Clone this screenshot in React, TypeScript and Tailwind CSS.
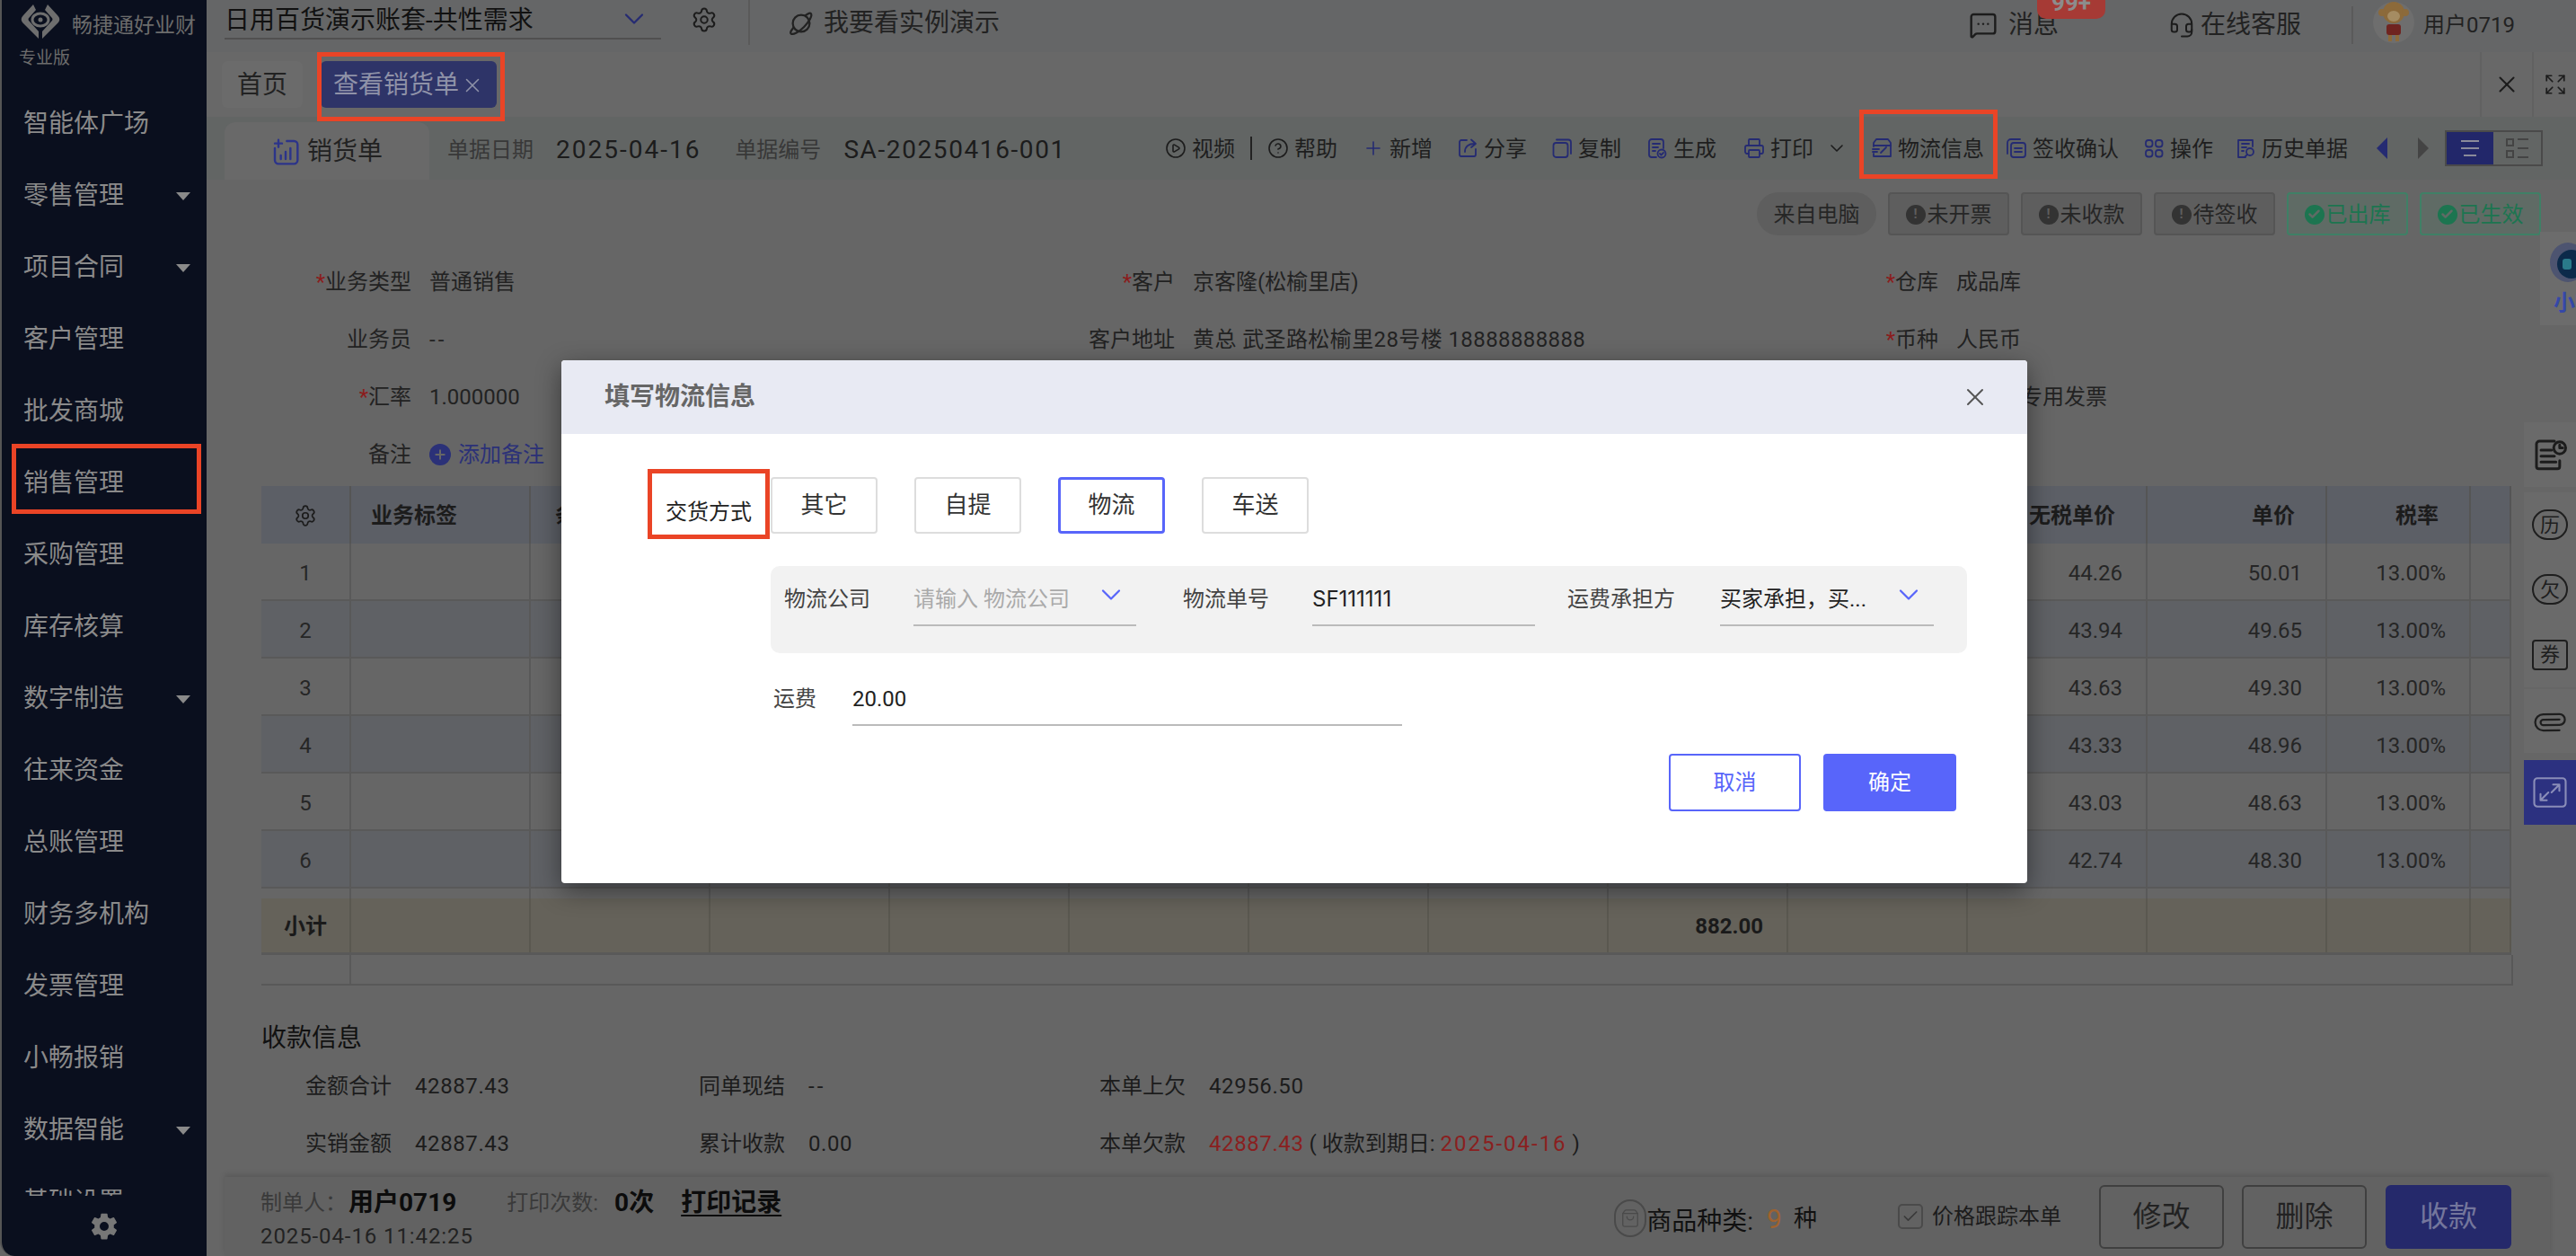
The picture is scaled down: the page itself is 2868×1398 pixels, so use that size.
import React from "react";
import { CirclePlay, CircleHelp, Plus, ChevronDown, Settings, X, Printer, Paperclip, Check, ShoppingBag, Expand, Headset, MessageSquareMore } from "lucide-react";
import { IoSettingsSharp } from "react-icons/io5";

const menu: [string, boolean][] = [
  ["智能体广场", false], ["零售管理", true], ["项目合同", true], ["客户管理", false], ["批发商城", false],
  ["销售管理", false], ["采购管理", false], ["库存核算", false], ["数字制造", true], ["往来资金", false],
  ["总账管理", false], ["财务多机构", false], ["发票管理", false], ["小畅报销", false], ["数据智能", true], ["基础设置", false],
];

const rows = [
  ["44.26", "50.01"], ["43.94", "49.65"], ["43.63", "49.30"], ["43.33", "48.96"], ["43.03", "48.63"], ["42.74", "48.30"],
];

const gridCols = "grid grid-cols-[100px_repeat(11,200px)_160px_45px]";
const cellIdx = Array.from({ length: 14 }, (_, i) => i);

function Ic({ children, w = 24 }: { children: React.ReactNode; w?: number }) {
  return (
    <svg width={w} height={w} viewBox="0 0 24 24" fill="none" stroke="currentColor" strokeWidth="1.8" strokeLinecap="round" strokeLinejoin="round" className="shrink-0">
      {children}
    </svg>
  );
}

const ShareI = () => <Ic><path d="M11 3H5a2 2 0 0 0-2 2v14a2 2 0 0 0 2 2h14a2 2 0 0 0 2-2v-6" /><path d="M9 16c0-6 4-9 11-9" /><path d="M16 2.5 21 7l-5 4" /></Ic>;
const CopyI = () => <Ic><rect x="2.5" y="6" width="16" height="16" rx="3" /><path d="M6 2.5h13a3 3 0 0 1 3 3V18" /></Ic>;
const GenI = () => <Ic><path d="M11 22H6a3 3 0 0 1-3-3V5a3 3 0 0 1 3-3h10a3 3 0 0 1 3 3v7" /><path d="M7 7h8M7 11h6M7 15h3" /><circle cx="17" cy="18" r="4.5" /><path d="m15 18 1.5 1.5 2.5-2.5" /></Ic>;
const TruckI = () => <Ic><path d="M3 10V6l3-4h13l3 4v15H3v-3" /><path d="M3 9h19" /><path d="M2 13h7M2 16h5" /><path d="m11 17 6-6" /></Ic>;
const SignI = () => <Ic><path d="M2 18V6a4 4 0 0 1 4-4h10" /><rect x="6" y="6" width="16" height="16" rx="3" /><path d="M10 12h8M10 16h8" /></Ic>;
const OpsI = () => <Ic><rect x="3" y="3" width="7.5" height="7.5" rx="3" /><rect x="14" y="3" width="7.5" height="7.5" rx="3" /><rect x="3" y="14" width="7.5" height="7.5" rx="3" /><rect x="14" y="14" width="7.5" height="7.5" rx="3" /></Ic>;
const HistI = () => <Ic><path d="M12 22H4V3h16v7" /><path d="M8 7h8M8 11h5M8 15h2" /><circle cx="17" cy="16" r="4" /><path d="m14 19-3 3" /></Ic>;
const SalesI = () => <Ic w={32}><path d="M13 3h6a3 3 0 0 1 3 3v13a3 3 0 0 1-3 3H6a3 3 0 0 1-3-3V9" /><path d="M3 5h6M6 2v6" /><path d="M8 18v-3M12 18v-6M16 18V9" /></Ic>;
const PlanetI = () => <Ic w={30}><circle cx="12" cy="12" r="7.5" /><path d="M5 16c-2.5 3-3 4.500-2 5.200 1.800 1.200 7-1.500 11.500-6 4.500-4.500 7.500-10 6.300-11.700-.7-1-2.500-.5-5 1.500" /></Ic>;

function Tool({ icon, label, gap = "mr-[27px]", blue = true }: { icon: React.ReactNode; label: string; gap?: string; blue?: boolean }) {
  return (
    <div className={`flex items-center gap-[6px] ${gap}`}>
      <span className={blue ? "text-[#252b72]" : "text-[#1c1c1c]"}>{icon}</span>
      <span className="pt-[2px] text-[24px] leading-[32px] text-[#1e1e1e]">{label}</span>
    </div>
  );
}

function Tag({ label, green }: { label: string; green?: boolean }) {
  return (
    <div className={`flex h-[48px] w-[135px] items-center justify-center gap-[2px] rounded-[4px] border-2 pt-[1px] text-[24px] ${green ? "border-[#3f8066] bg-[#5f6b65] text-[#1c7550]" : "border-[#555555] bg-[#5e5e5e] text-[#262626]"}`}>
      <span className={`flex h-[22px] w-[22px] items-center justify-center rounded-full text-[15px] font-bold ${green ? "bg-[#1c7550] text-[#5f6b65]" : "bg-[#333333] text-[#5e5e5e]"}`}>
        {green ? <Check size={15} strokeWidth={4} /> : "!"}
      </span>
      {label}
    </div>
  );
}

function Field({ label, value, star, valueClass = "" }: { label: string; value?: React.ReactNode; star?: boolean; valueClass?: string }) {
  return (
    <div className="flex h-[64px] items-center pt-[2px] text-[24px] text-[#222222]">
      <div className="w-[208px] shrink-0 text-right">
        {star && <span className="text-[#8b1c1c]">*</span>}
        {label}
      </div>
      <div className={`ml-[20px] whitespace-nowrap ${valueClass}`}>{value}</div>
    </div>
  );
}

function Info({ label, value, valueClass = "tracking-[0.6px]" }: { label: string; value: React.ReactNode; valueClass?: string }) {
  return (
    <div className="flex h-[64px] items-center pt-[2px] text-[24px] text-[#1c1c1c]">
      <span className="w-[122px] shrink-0">{label}</span>
      <span className={`whitespace-nowrap ${valueClass}`}>{value}</span>
    </div>
  );
}

function ModalField({ label, w, labelW, value, placeholder, chevron, valueClass = "" }: { label: string; w: string; labelW: string; value: string; placeholder?: boolean; chevron?: boolean; valueClass?: string }) {
  return (
    <div className="flex items-start">
      <span className={`text-[24px] leading-[40px] text-[#444444] ${labelW}`}>{label}</span>
      <div className={`flex h-[50px] items-start justify-between border-b-2 border-[#bbbbbb] pr-[10px] ${w}`}>
        <span className={`text-[24px] leading-[40px] ${placeholder ? "text-[#aaaaaa]" : "text-[#222222]"} ${valueClass}`}>{value}</span>
        {chevron && <ChevronDown size={36} strokeWidth={1.5} className="mt-[-3px] text-[#5865fa]" />}
      </div>
    </div>
  );
}

function Choice({ label, active }: { label: string; active?: boolean }) {
  return (
    <button className={`flex h-[63px] w-[119px] items-center justify-center rounded-[4px] text-[26px] text-[#333333] ${active ? "border-[3px] border-[#5865fa]" : "border-2 border-[#dddddd]"}`}>
      {label}
    </button>
  );
}

function RedBox({ className }: { className: string }) {
  return <div className={`pointer-events-none absolute z-30 border-[5px] border-[#ea4426] ${className}`} />;
}

function SideTab({ className, children }: { className: string; children: React.ReactNode }) {
  return <div className={`absolute left-[2810px] w-[58px] bg-[#6a6a6a] ${className}`}>{children}</div>;
}

export default function App() {
  return (
    <div className="relative flex h-[1398px] w-[2868px] overflow-hidden bg-[#666666] font-['Roboto','Noto_Sans_CJK_SC',sans-serif]">
      {/* 侧栏 */}
      <aside className="flex h-full w-[230px] shrink-0 flex-col overflow-hidden rounded-bl-[16px] border-l-2 border-[#555555] bg-[#0a0f1e]">
        <div className="h-[98px] shrink-0 pl-[19px] pt-[4px]">
          <div className="flex items-end">
            <svg width="48" height="40" viewBox="0 0 48 40" className="shrink-0">
              <path d="M16 1 5 13 c-3 3-3 6 0 9 l17 17 v-8 L12 20 c-2-2-2-3 0-5 l7-8z" fill="#6e6e6e" />
              <path d="M32 1 43 13 c3 3 3 6 0 9 L26 39 v-8 l10-11 c2-2 2-3 0-5 l-7-8z" fill="#6e6e6e" />
              <ellipse cx="24" cy="18" rx="9" ry="7" fill="none" stroke="#6e6e6e" strokeWidth="3" />
              <circle cx="24" cy="18" r="2.5" fill="#6e6e6e" />
            </svg>
            <span className="ml-[11px] whitespace-nowrap text-[23px] leading-[30px] text-[#6c6c6c]">畅捷通好业财</span>
          </div>
          <div className="mt-[6px] text-[19px] leading-[30px] text-[#6c6c6c]">专业版</div>
        </div>
        <nav className="min-h-0 flex-1 overflow-hidden">
          {menu.map(([name, arrow]) => (
            <div key={name} className="flex h-[80px] items-center justify-between pl-[24px] pr-[18px] text-[28px] text-[#8a8a8a]">
              <span className="whitespace-nowrap">{name}</span>
              {arrow && <span className="h-0 w-0 border-x-[8px] border-t-[9px] border-x-transparent border-t-[#8a8a8a]" />}
            </div>
          ))}
        </nav>
        <div className="flex h-[67px] shrink-0 items-center justify-center text-[#777777]">
          <IoSettingsSharp size={32} />
        </div>
      </aside>

      {/* 主区域 */}
      <main className="flex min-w-0 flex-1 flex-col">
        {/* 顶栏 */}
        <header className="relative flex h-[58px] shrink-0 items-start bg-[#656667]">
          <div className="ml-[20px] flex h-[44px] w-[486px] items-center justify-between border-b-2 border-[#505050] pr-[12px]">
            <span className="pt-[3px] text-[28px] text-[#111111]">日用百货演示账套-共性需求</span>
            <ChevronDown size={36} strokeWidth={1.5} className="text-[#252b72]" />
          </div>
          <Settings size={30} strokeWidth={1.6} className="ml-[33px] mt-[7px] text-[#1c1c1c]" />
          <div className="ml-[34px] h-[50px] w-[2px] bg-[#5a5a5a]" />
          <div className="ml-[42px] mt-[6px] flex items-center gap-[10px] text-[28px] leading-[40px] text-[#222222]">
            <PlanetI />
            <span>我要看实例演示</span>
          </div>
          <div className="ml-auto mr-[68px] mt-[5px] flex items-center">
            <div className="relative flex items-center gap-[12px]">
              <MessageSquareMore size={32} strokeWidth={1.8} className="text-[#1c1c1c]" />
              <span className="text-[28px] leading-[40px] text-[#222222]">消息</span>
              <span className="absolute left-[76px] top-[-23px] flex h-[36px] w-[76px] items-end justify-center rounded-b-[10px] rounded-tr-[10px] bg-[#a63a35] text-[26px] font-bold leading-[36px] text-[#8c8c8c]">99+</span>
            </div>
            <div className="ml-[122px] flex items-center gap-[6px]">
              <Headset size={30} strokeWidth={1.6} className="text-[#1c1c1c]" />
              <span className="text-[28px] leading-[40px] text-[#222222]">在线客服</span>
            </div>
            <div className="ml-[56px] h-[42px] w-[2px] bg-[#5a5a5a]" />
            <svg width="46" height="50" viewBox="0 0 46 50" className="ml-[22px] mt-[-4px]">
              <circle cx="23" cy="24" r="23" fill="#6e6e6e" />
              <circle cx="23" cy="13" r="12" fill="#8c6a3a" />
              <circle cx="10" cy="13" r="4" fill="#8c6a3a" />
              <circle cx="36" cy="13" r="4" fill="#8c6a3a" />
              <ellipse cx="23" cy="17" rx="7" ry="6" fill="#a58c62" />
              <rect x="15" y="26" width="16" height="12" rx="3" fill="#6f2420" />
              <rect x="17" y="38" width="4" height="7" fill="#8c6a3a" />
              <rect x="25" y="38" width="4" height="7" fill="#8c6a3a" />
            </svg>
            <span className="ml-[10px] text-[24px] leading-[40px] text-[#222222]">用户0719</span>
          </div>
        </header>

        {/* 页签栏 */}
        <div className="flex h-[72px] shrink-0 items-start bg-[#686868]">
          <div className="ml-[17px] mt-[10px] flex h-[52px] w-[90px] items-center justify-center rounded-[6px] bg-[#6b6b6b] pt-[2px] text-[28px] text-[#222222]">首页</div>
          <div className="ml-[20px] mt-[10px] flex h-[52px] w-[196px] items-center justify-center gap-[2px] rounded-[6px] bg-[#2e3468] pt-[2px] text-[28px] text-[#8f92a8]">
            查看销货单
            <X size={26} strokeWidth={1.4} />
          </div>
          <div className="ml-auto flex h-full">
            <div className="flex h-full w-[60px] items-center justify-center border-x-2 border-[#616161] text-[#1c1c1c]"><X size={30} strokeWidth={1.6} /></div>
            <div className="flex h-full w-[47px] items-center justify-center text-[#1c1c1c]"><Expand size={26} strokeWidth={1.6} /></div>
          </div>
        </div>

        {/* 工具栏 */}
        <div className="flex h-[70px] shrink-0 items-end bg-[#626564]">
          <div className="ml-[20px] flex h-[64px] w-[228px] items-center justify-center gap-[8px] rounded-t-[12px] bg-[#696969] pt-[2px] text-[28px] text-[#222222]">
            <span className="text-[#2c348a]"><SalesI /></span>
            销货单
          </div>
          <div className="flex h-full items-center pt-[3px]">
            <span className="ml-[20px] text-[24px] text-[#383838]">单据日期</span>
            <span className="ml-[25px] text-[28px] tracking-[2px] text-[#1c1c1c]">2025-04-16</span>
            <span className="ml-[38px] text-[24px] text-[#383838]">单据编号</span>
            <span className="ml-[25px] text-[28px] tracking-[1.6px] text-[#1c1c1c]">SA-20250416-001</span>
          </div>
          <div className="ml-auto mr-[37px] flex h-full items-center">
            <Tool blue={false} icon={<CirclePlay size={24} strokeWidth={1.6} />} label="视频" gap="mr-[17px]" />
            <div className="mr-[17px] h-[26px] w-[2px] bg-[#222222]" />
            <Tool blue={false} icon={<CircleHelp size={24} strokeWidth={1.6} />} label="帮助" gap="mr-[28px]" />
            <Tool icon={<Plus size={24} strokeWidth={1.6} />} label="新增" />
            <Tool icon={<ShareI />} label="分享" />
            <Tool icon={<CopyI />} label="复制" gap="mr-[28px]" />
            <Tool icon={<GenI />} label="生成" gap="mr-[30px]" />
            <Tool icon={<Printer size={24} strokeWidth={1.8} />} label="打印" gap="mr-[14px]" />
            <ChevronDown size={24} strokeWidth={1.6} className="mr-[26px] text-[#1c1c1c]" />
            <Tool icon={<TruckI />} label="物流信息" gap="mr-[24px]" />
            <Tool icon={<SignI />} label="签收确认" gap="mr-[27px]" />
            <Tool icon={<OpsI />} label="操作" gap="mr-[24px]" />
            <Tool icon={<HistI />} label="历史单据" gap="mr-[32px]" />
            <span className="h-0 w-0 border-y-[12px] border-r-[12px] border-y-transparent border-r-[#252b72]" />
            <span className="ml-[34px] h-0 w-0 border-y-[12px] border-l-[12px] border-y-transparent border-l-[#444444]" />
            <div className="ml-[18px] flex h-[40px] w-[109px] border-2 border-[#4a4a4a]">
              <div className="flex w-[52px] flex-col items-center justify-center gap-[6px] bg-[#22276a]">
                <span className="h-[2px] w-[20px] bg-[#8a8a9a]" />
                <span className="h-[2px] w-[20px] bg-[#8a8a9a]" />
                <span className="h-[2px] w-[14px] bg-[#8a8a9a]" />
              </div>
              <div className="flex flex-1 items-center justify-center gap-[4px]">
                <span className="flex flex-col gap-[4px]"><span className="h-[9px] w-[9px] border-2 border-[#444444]" /><span className="h-[9px] w-[9px] border-2 border-[#444444]" /></span>
                <span className="flex flex-col gap-[8px]"><span className="h-[2px] w-[12px] bg-[#444444]" /><span className="h-[2px] w-[12px] bg-[#444444]" /><span className="h-[2px] w-[12px] bg-[#444444]" /></span>
              </div>
            </div>
          </div>
        </div>

        {/* 单据主体 */}
        <div className="flex min-h-0 flex-1 flex-col">
          <div className="ml-[20px] mr-[29px] min-h-0 flex-1 overflow-hidden bg-[#666666]">
            <div className="flex justify-end gap-[13px] pr-[10px] pt-[14px]">
              <div className="flex h-[48px] w-[133px] items-center justify-center rounded-full bg-[#5e5e5e] pt-[1px] text-[24px] text-[#262626]">来自电脑</div>
              <Tag label="未开票" />
              <Tag label="未收款" />
              <Tag label="待签收" />
              <Tag label="已出库" green />
              <Tag label="已生效" green />
            </div>

            <div className="mt-[19px] grid grid-cols-[850px_850px_850px]">
              <Field star label="业务类型" value="普通销售" />
              <Field star label="客户" value="京客隆(松榆里店)" />
              <Field star label="仓库" value="成品库" />
              <Field label="业务员" value="--" valueClass="tracking-[3px]" />
              <Field label="客户地址" value="黄总 武圣路松榆里28号楼 18888888888" valueClass="tracking-[0.4px]" />
              <Field star label="币种" value="人民币" />
              <Field star label="汇率" value="1.000000" />
              <div />
              <Field label="发票类型" value="增值税专用发票" />
              <Field
                label="备注"
                value={
                  <span className="flex items-center gap-[8px] text-[#2b3178]">
                    <span className="flex h-[24px] w-[24px] items-center justify-center rounded-full bg-[#2b3178] text-[#666666]"><Plus size={16} strokeWidth={3} /></span>
                    添加备注
                  </span>
                }
              />
            </div>

            {/* 表格 */}
            <div className="ml-[41px] mt-[4px] w-[2505px]">
              <div className={`${gridCols} h-[64px] bg-[#5c5f66] text-[24px] font-bold text-[#1c1c1c]`}>
                {cellIdx.map((i) => (
                  <div key={i} className={`flex items-center overflow-hidden border-r-2 border-[#555555] pt-[2px] ${i === 10 || i === 11 || i === 12 ? "justify-end pr-[34px]" : ""} ${i === 0 ? "justify-center" : ""} ${i === 1 ? "pl-[22px]" : ""} ${i === 2 ? "pl-[27px]" : ""}`}>
                    {i === 0 && <Settings size={26} strokeWidth={1.6} />}
                    {i === 1 && "业务标签"}
                    {i === 2 && "条形码"}
                    {i === 10 && "无税单价"}
                    {i === 11 && "单价"}
                    {i === 12 && "税率"}
                  </div>
                ))}
              </div>
              {rows.map(([net, price], r) => (
                <div key={r} className={`${gridCols} h-[64px] border-b-2 border-[#595959] text-[24px] text-[#262626] ${r % 2 === 1 ? "bg-[#5f6165]" : "bg-[#666666]"}`}>
                  {cellIdx.map((i) => (
                    <div key={i} className={`flex items-center border-r-2 border-[#595959] pt-[3px] ${i === 0 ? "justify-center" : "justify-end pr-[26px]"}`}>
                      {i === 0 && r + 1}
                      {i === 10 && net}
                      {i === 11 && price}
                      {i === 12 && "13.00%"}
                    </div>
                  ))}
                </div>
              ))}
              <div className={`${gridCols} h-[11px]`}>
                {cellIdx.map((i) => <div key={i} className="border-r-2 border-[#595959]" />)}
              </div>
              <div className={`${gridCols} h-[63px] border-b-[3px] border-[#595959] bg-[#65625a] text-[24px] font-bold text-[#1a1a1a]`}>
                {cellIdx.map((i) => (
                  <div key={i} className={`flex items-center border-r-2 border-[#5a5850] pt-[2px] ${i === 0 ? "justify-center" : "justify-end pr-[26px]"}`}>
                    {i === 0 && "小计"}
                    {i === 8 && "882.00"}
                  </div>
                ))}
              </div>
              <div className="flex h-[34px] w-[2507px] border-b-2 border-r-2 border-[#585858]">
                <div className="w-[100px] border-r-2 border-[#595959]" />
              </div>
            </div>

            {/* 收款信息 */}
            <div className="ml-[41px] mt-[39px] text-[28px] leading-[40px] text-[#111111]">收款信息</div>
            <div className="ml-[90px] grid grid-cols-[438px_446px_1fr]">
              <Info label="金额合计" value="42887.43" />
              <Info label="同单现结" value="--" valueClass="tracking-[3px]" />
              <Info label="本单上欠" value="42956.50" />
              <Info label="实销金额" value="42887.43" />
              <Info label="累计收款" value="0.00" />
              <Info
                label="本单欠款"
                valueClass=""
                value={<><span className="tracking-[0.6px] text-[#8a1f1f]">42887.43</span> ( 收款到期日: <span className="tracking-[2px] text-[#8a1f1f]">2025-04-16</span> )</>}
              />
            </div>
          </div>

          {/* 底栏 */}
          <footer className="ml-[20px] mr-[29px] flex h-[88px] shrink-0 items-center bg-[#626262] pl-[40px] pr-[43px] shadow-[0_-3px_6px_rgba(0,0,0,0.12)]">
            <div>
              <div className="flex items-center text-[24px] leading-[44px] text-[#3a3a3a]">
                制单人：
                <span className="ml-[2px] text-[28px] font-bold text-[#0c0c0c]">用户0719</span>
                <span className="ml-[56px]">打印次数:</span>
                <span className="ml-[18px] text-[28px] font-bold text-[#0c0c0c]">0次</span>
                <span className="ml-[30px] text-[28px] font-bold text-[#0c0c0c] underline underline-offset-4">打印记录</span>
              </div>
              <div className="text-[24px] leading-[30px] tracking-[0.9px] text-[#222222]">2025-04-16 11:42:25</div>
            </div>
            <div className="ml-auto flex items-center">
              <span className="mt-[4px] flex h-[42px] w-[36px] items-center justify-center rounded-full border-2 border-[#4a4a4a] text-[#4a4a4a]"><ShoppingBag size={22} strokeWidth={1.4} /></span>
              <span className="mt-[12px] text-[28px] leading-[40px] text-[#111111]">商品种类:</span>
              <span className="ml-[15px] mt-[4px] text-[30px] text-[#a0622e]">9</span>
              <span className="ml-[13px] mt-[4px] text-[26px] text-[#111111]">种</span>
              <span className="ml-[90px] flex h-[28px] w-[28px] items-center justify-center rounded-[5px] border-2 border-[#4a4a4a] text-[#3a3a3a]"><Check size={20} strokeWidth={2} /></span>
              <span className="ml-[10px] text-[24px] text-[#1c1c1c]">价格跟踪本单</span>
              <button className="ml-[42px] h-[71px] w-[139px] rounded-[6px] border-2 border-[#404040] text-[32px] text-[#222222]">修改</button>
              <button className="ml-[20px] h-[71px] w-[139px] rounded-[6px] border-2 border-[#404040] text-[32px] text-[#222222]">删除</button>
              <button className="ml-[21px] h-[71px] w-[140px] rounded-[6px] bg-[#25296b] text-[32px] text-[#74769c]">收款</button>
            </div>
          </footer>
        </div>
      </main>

      {/* 右侧悬浮 */}
      <div className="absolute left-[2828px] top-[258px] flex h-[104px] w-[40px] flex-col items-start overflow-hidden bg-[#6c6c6c] pl-[15px]">
        <svg width="50" height="56" viewBox="0 0 50 56" className="ml-[-8px] mt-[8px] shrink-0">
          <ellipse cx="24" cy="26" rx="20" ry="22" fill="#4d5470" />
          <ellipse cx="28" cy="28" rx="16" ry="16" fill="#0c2a4a" />
          <rect x="18" y="22" width="10" height="12" rx="3" fill="#2a7a8a" />
        </svg>
        <span className="whitespace-nowrap text-[24px] font-bold leading-[30px] text-[#3548a8]">小畅</span>
      </div>
      <SideTab className="top-[470px] flex h-[72px] items-center justify-center text-[#1c1c1c]">
        <Ic w={40}><path d="M15 3H5a2 2 0 0 0-2 2v15a1.5 1.5 0 0 0 1.5 1.500H17a1.5 1.5 0 0 0 1.5-1.5v-4" /><path d="M6 9h7M6 13h9M6 17h10" /><circle cx="18.5" cy="7.5" r="4" /><path d="M18.5 5.5v2h2" /></Ic>
      </SideTab>
      <SideTab className="top-[548px] flex h-[217px] flex-col items-center justify-around text-[#1e1e1e]">
        <span className="flex h-[34px] w-[40px] items-center justify-center rounded-full border-2 border-[#1e1e1e] text-[22px]">历</span>
        <span className="flex h-[34px] w-[40px] items-center justify-center rounded-full border-2 border-[#1e1e1e] text-[22px]">欠</span>
        <span className="flex h-[34px] w-[40px] items-center justify-center rounded-[4px] border-2 border-[#1e1e1e] text-[22px]">券</span>
      </SideTab>
      <SideTab className="top-[767px] flex h-[71px] items-center justify-center text-[#1e1e1e]">
        <Paperclip size={36} strokeWidth={1.5} className="rotate-45" />
      </SideTab>
      <div className="absolute left-[2810px] top-[846px] flex h-[72px] w-[58px] items-center justify-center bg-[#2c3180] text-[#8a8db8]">
        <Ic w={42}><rect x="2" y="3" width="20" height="18" rx="2" strokeWidth="1.2" /><path d="M14 7h4v4M18 7l-5 5M6 17v-4M6 17h4M6 17l5-5" strokeWidth="1.2" /></Ic>
      </div>

      {/* 弹窗 */}
      <div className="absolute left-[625px] top-[401px] z-20 h-[582px] w-[1632px] rounded-[4px] bg-white shadow-[0_8px_28px_rgba(0,0,0,0.45)]">
        <div className="flex h-[82px] items-center justify-between rounded-t-[4px] bg-[#e8eaf3] pl-[48px] pr-[42px]">
          <span className="text-[28px] font-bold text-[#666666]">填写物流信息</span>
          <X size={32} strokeWidth={1.5} className="text-[#555555]" />
        </div>
        <div className="flex items-start pt-[48px]">
          <div className="w-[233px] pr-[21px] pt-[22px] text-right text-[24px] leading-[34px] text-[#222222]">交货方式</div>
          <div className="flex gap-[41px]">
            <Choice label="其它" />
            <Choice label="自提" />
            <Choice label="物流" active />
            <Choice label="车送" />
          </div>
        </div>
        <div className="ml-[233px] mt-[36px] flex h-[97px] w-[1332px] items-start rounded-[10px] bg-[#f2f2f2] pl-[15px] pt-[17px]">
          <ModalField label="物流公司" labelW="w-[144px]" w="w-[248px]" value="请输入 物流公司" placeholder chevron />
          <div className="ml-[52px]"><ModalField label="物流单号" labelW="w-[144px]" w="w-[248px]" value="SF111111" valueClass="font-['Inter']" /></div>
          <div className="ml-[36px]"><ModalField label="运费承担方" labelW="w-[170px]" w="w-[238px]" value="买家承担，买..." chevron /></div>
        </div>
        <div className="ml-[236px] mt-[31px]">
          <ModalField label="运费" labelW="w-[88px]" w="w-[612px]" value="20.00" />
        </div>
        <div className="mr-[79px] mt-[31px] flex justify-end gap-[25px]">
          <button className="h-[64px] w-[147px] rounded-[4px] border-2 border-[#5865fa] text-[24px] text-[#5865fa]">取消</button>
          <button className="h-[64px] w-[148px] rounded-[4px] bg-[#5865fa] text-[24px] text-white">确定</button>
        </div>
      </div>

      {/* 标注 */}
      <RedBox className="left-[13px] top-[494px] h-[78px] w-[211px]" />
      <RedBox className="left-[353px] top-[58px] h-[77px] w-[209px]" />
      <RedBox className="left-[2070px] top-[122px] h-[77px] w-[154px]" />
      <RedBox className="left-[721px] top-[522px] h-[78px] w-[136px]" />
    </div>
  );
}
